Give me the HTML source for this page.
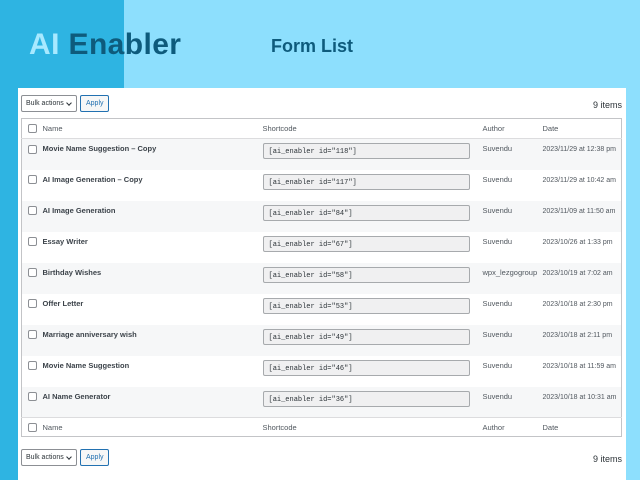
<!DOCTYPE html>
<html><head><style>
*{box-sizing:border-box;margin:0;padding:0}
body{width:640px;height:480px;overflow:hidden;background:#8ddffd;font-family:"Liberation Sans",sans-serif;position:relative}
.dk{position:absolute;left:0;top:0;width:124px;height:88px;background:#2eb4e2}
.dk2{position:absolute;left:0;top:88px;width:18px;height:392px;background:#2eb4e2}
.t1{position:absolute;left:29px;top:28px;font-size:30px;font-weight:bold;color:#0e5b7c;letter-spacing:0.4px;white-space:nowrap}
.t1 span{color:#a8e9ff}
.t2{position:absolute;left:271px;top:36px;font-size:18px;font-weight:bold;color:#0e5b7c}
.panel{position:absolute;left:18px;top:88px;width:608px;height:392px;background:#fff}
.bulk{position:absolute;left:3px;width:56px;height:17px;border:1px solid #8c8f94;border-radius:2px;font-size:7px;color:#2c3338;padding:4px 0 0 4px;background:#fff;white-space:nowrap}
.bulk i{position:absolute;right:5px;top:5px;width:4px;height:4px;border-right:1px solid #2c3338;border-bottom:1px solid #2c3338;transform:rotate(45deg)}
.apply{position:absolute;left:62px;width:29px;height:17px;border:1px solid #2271b1;border-radius:2px;font-size:7px;color:#2271b1;padding:4px 0 0 5px;background:#f6f7f7}
.items{position:absolute;right:4px;font-size:9px;color:#2c3338}
table{position:absolute;left:3px;top:30px;width:601px;border:1px solid #c3c4c7;border-collapse:collapse;font-size:7.5px;color:#50575e;table-layout:fixed}
td{vertical-align:top;padding:0;white-space:nowrap;overflow:visible}
tr.h td{height:20px;vertical-align:middle;border-bottom:1px solid #dcdcde}
tr.f td{height:19px;vertical-align:middle;border-top:1px solid #dcdcde}
tr.r td{height:31px;padding-top:5px}
tr.r td.d{font-size:7px;padding-top:7px}
tr.r:nth-child(even) td{background:#f6f7f8}
.cb{display:inline-block;width:9px;height:9px;border:1px solid #8c8f94;border-radius:2px;background:#fff;margin:0 0 0 6px;vertical-align:middle}
td.c{width:21px}
td.n{width:220px}
td.s{width:220px}
td.a{width:60px}
.nm{font-weight:bold;color:#3c434a;font-size:7.5px}
.code{display:block;width:207px;height:16px;border:1px solid #a7aaad;border-radius:2px;background:#f0f0f1;font-family:"Liberation Mono",monospace;font-size:7px;color:#2c3338;padding:4px 0 0 5px;margin-top:-1px}
</style></head><body>
<div class="dk"></div><div class="dk2"></div>
<div class="t1"><span>AI</span> Enabler</div>
<div class="t2">Form List</div>
<div class="panel">
<div class="bulk" style="top:7px">Bulk actions<i></i></div><div class="apply" style="top:7px">Apply</div>
<div class="items" style="top:12px">9 items</div>
<table>
<tr class="h"><td class="c"><span class="cb"></span></td><td class="n">Name</td><td class="s">Shortcode</td><td class="a">Author</td><td>Date</td></tr>
<tr class="r"><td class="c"><span class="cb"></span></td><td class="n nm">Movie Name Suggestion – Copy</td><td class="s"><span class="code">[ai_enabler id="118"]</span></td><td>Suvendu</td><td class="d">2023/11/29 at 12:38 pm</td></tr>
<tr class="r"><td class="c"><span class="cb"></span></td><td class="n nm">AI Image Generation – Copy</td><td class="s"><span class="code">[ai_enabler id="117"]</span></td><td>Suvendu</td><td class="d">2023/11/29 at 10:42 am</td></tr>
<tr class="r"><td class="c"><span class="cb"></span></td><td class="n nm">AI Image Generation</td><td class="s"><span class="code">[ai_enabler id="84"]</span></td><td>Suvendu</td><td class="d">2023/11/09 at 11:50 am</td></tr>
<tr class="r"><td class="c"><span class="cb"></span></td><td class="n nm">Essay Writer</td><td class="s"><span class="code">[ai_enabler id="67"]</span></td><td>Suvendu</td><td class="d">2023/10/26 at 1:33 pm</td></tr>
<tr class="r"><td class="c"><span class="cb"></span></td><td class="n nm">Birthday Wishes</td><td class="s"><span class="code">[ai_enabler id="58"]</span></td><td>wpx_lezgogroup</td><td class="d">2023/10/19 at 7:02 am</td></tr>
<tr class="r"><td class="c"><span class="cb"></span></td><td class="n nm">Offer Letter</td><td class="s"><span class="code">[ai_enabler id="53"]</span></td><td>Suvendu</td><td class="d">2023/10/18 at 2:30 pm</td></tr>
<tr class="r"><td class="c"><span class="cb"></span></td><td class="n nm">Marriage anniversary wish</td><td class="s"><span class="code">[ai_enabler id="49"]</span></td><td>Suvendu</td><td class="d">2023/10/18 at 2:11 pm</td></tr>
<tr class="r"><td class="c"><span class="cb"></span></td><td class="n nm">Movie Name Suggestion</td><td class="s"><span class="code">[ai_enabler id="46"]</span></td><td>Suvendu</td><td class="d">2023/10/18 at 11:59 am</td></tr>
<tr class="r"><td class="c"><span class="cb"></span></td><td class="n nm">AI Name Generator</td><td class="s"><span class="code">[ai_enabler id="36"]</span></td><td>Suvendu</td><td class="d">2023/10/18 at 10:31 am</td></tr>
<tr class="f"><td class="c"><span class="cb"></span></td><td class="n">Name</td><td class="s">Shortcode</td><td class="a">Author</td><td>Date</td></tr>
</table>
<div class="bulk" style="top:361px">Bulk actions<i></i></div><div class="apply" style="top:361px">Apply</div>
<div class="items" style="top:366px">9 items</div>
</div>
</body></html>
